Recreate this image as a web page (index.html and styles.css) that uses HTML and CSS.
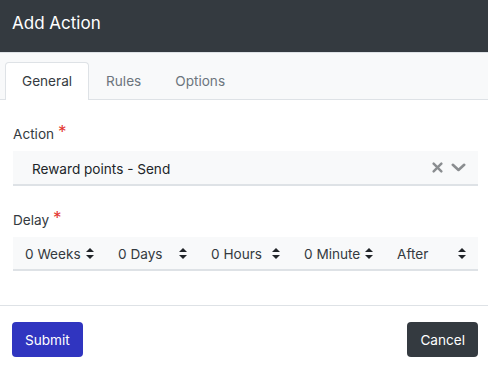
FILE: index.html
```html
<!DOCTYPE html>
<html lang="en">
<head>
    <meta charset="UTF-8">
    <title>Add Action</title>
    <link rel="stylesheet" href="styles.css">
</head>
<body>
    <div class="modal">
        <div class="modal-header">Add Action</div>

        <div class="tabs">
            <div class="tab active">General</div>
            <div class="tab">Rules</div>
            <div class="tab">Options</div>
        </div>

        <div class="modal-body">
            <div class="field-label">Action <span class="required">*</span></div>
            <div class="select">
                <span class="select-value">Reward points - Send</span>
                <span class="select-icons">
                    <svg class="icon-clear" width="11" height="11" viewBox="0 0 10 10">
                        <path d="M1.5 1.5 L8.5 8.5 M8.5 1.5 L1.5 8.5" stroke="#8a8d90" stroke-width="2.2" stroke-linecap="round"/>
                    </svg>
                    <svg class="icon-chevron" width="15" height="9" viewBox="0 0 15 9">
                        <path d="M1.8 1.8 L7.5 7 L13.2 1.8" fill="none" stroke="#8a8d90" stroke-width="2.6" stroke-linecap="round" stroke-linejoin="round"/>
                    </svg>
                </span>
            </div>

            <div class="field-label delay-label">Delay <span class="required">*</span></div>
            <div class="delay-row">
                <div class="delay-select"><span class="delay-value">0 Weeks</span><svg class="sort" width="8" height="11" viewBox="0 0 8 11"><path d="M4 0 L8 4 L0 4 Z M4 11 L8 7 L0 7 Z" fill="#212529"/></svg></div>
                <div class="delay-select"><span class="delay-value">0 Days</span><svg class="sort" width="8" height="11" viewBox="0 0 8 11"><path d="M4 0 L8 4 L0 4 Z M4 11 L8 7 L0 7 Z" fill="#212529"/></svg></div>
                <div class="delay-select"><span class="delay-value">0 Hours</span><svg class="sort" width="8" height="11" viewBox="0 0 8 11"><path d="M4 0 L8 4 L0 4 Z M4 11 L8 7 L0 7 Z" fill="#212529"/></svg></div>
                <div class="delay-select"><span class="delay-value">0 Minutes</span><svg class="sort" width="8" height="11" viewBox="0 0 8 11"><path d="M4 0 L8 4 L0 4 Z M4 11 L8 7 L0 7 Z" fill="#212529"/></svg></div>
                <div class="delay-select"><span class="delay-value">After</span><svg class="sort" width="8" height="11" viewBox="0 0 8 11"><path d="M4 0 L8 4 L0 4 Z M4 11 L8 7 L0 7 Z" fill="#212529"/></svg></div>
            </div>
        </div>

        <div class="modal-footer">
            <button class="btn btn-primary">Submit</button>
            <button class="btn btn-dark">Cancel</button>
        </div>
    </div>
</body>
</html>
```

FILE: styles.css
```css
body {
    margin: 0;
    font-family: Inter, "Noto Sans", sans-serif;
    font-size: 13.6px;
    color: #343a40;
    background: #fff;
}

.modal {
    width: 488px;
    height: 370px;
    display: flex;
    flex-direction: column;
}

.modal-header {
    height: 49px;
    background-color: #343a40;
    color: #fff;
    font-size: 17px;
    padding: 3px 12px 0;
    line-height: 40px;
    border-bottom: 1px solid #dee2e6;
}

/* barra de abas */
.tabs {
    height: 37px;
    padding: 9px 5px 0;
    background-color: #f8f9fa;
    border-bottom: 1px solid #dee2e6;
    display: flex;
}

.tab {
    padding: 0 16px;
    line-height: 37px;
    color: #6c757d;
    border: 1px solid transparent;
    border-bottom: none;
    border-radius: 4px 4px 0 0;
    margin-bottom: -1px;
}

.tab.active {
    background-color: #fff;
    color: #343a40;
    border-color: #dee2e6;
}

.modal-body {
    padding: 24px 10px 34px 13px;
    border-bottom: 1px solid #dee2e6;
}

.field-label {
    line-height: 20px;
    margin-bottom: 7px;
}

.delay-label {
    margin-top: 24px;
}

.required {
    color: #e3342f;
    font-size: 17px;
    vertical-align: top;
    line-height: 16px;
}

.select {
    height: 30px;
    padding: 3px 12px 0 19px;
    background-color: #f8f9fa;
    border-bottom: 2px solid #dee2e6;
    display: flex;
    align-items: center;
    justify-content: space-between;
    color: #212529;
}

.select-icons {
    display: flex;
    align-items: center;
    gap: 8px;
    margin-top: -3px;
}

.delay-row {
    height: 32px;
    background-color: #f8f9fa;
    border-bottom: 2px solid #dee2e6;
    display: grid;
    grid-template-columns: repeat(5, 1fr);
}

.delay-select {
    display: flex;
    align-items: center;
    padding: 2px 12px 0 12px;
    gap: 4px;
    color: #343a40;
    overflow: hidden;
}

.delay-value {
    flex: 1;
    white-space: nowrap;
    overflow: hidden;
}

.sort {
    flex-shrink: 0;
    margin-top: -2px;
}

.modal-footer {
    flex: 1;
    display: flex;
    justify-content: space-between;
    align-items: flex-start;
    padding: 16px 10px 0 12px;
}

.btn {
    height: 35px;
    padding: 0 13px;
    border: none;
    border-radius: 4px;
    font-family: inherit;
    font-size: 13.6px;
    color: #fff;
    cursor: pointer;
}

.btn-primary {
    background-color: #3035c0;
}

.btn-dark {
    background-color: #343a40;
}
```
